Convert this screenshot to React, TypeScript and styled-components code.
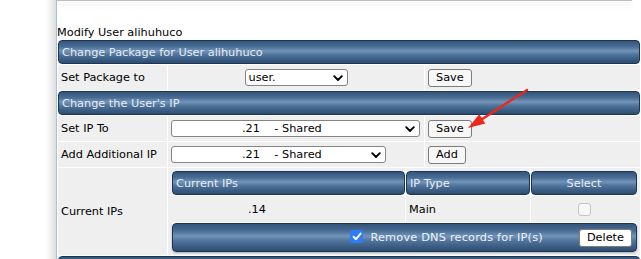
import React from 'react';
import styled, { createGlobalStyle } from 'styled-components';

const GlobalStyle = createGlobalStyle`
  html, body { margin: 0; padding: 0; background: #fff; }
  body {
    font-family: "DejaVu Sans", Verdana, sans-serif;
    font-size: 11.3px;
    color: #000;
    overflow: hidden;
  }
  * { box-sizing: border-box; }
`;

const barGradient = `linear-gradient(to bottom, #33557b 0%, #486c94 25%, #7394b9 45%, #50749b 62%, #2c4c71 100%)`;

const Page = styled.div`
  position: relative;
  display: flex;
  width: 641px;
  height: 259px;
  overflow: hidden;
`;

const Gutter = styled.div`
  flex: none;
  width: 57px;
  background: linear-gradient(to right, #fff 0, #fff 46px, #dedede 56px);
  border-right: 1px solid #a7c1dc;
`;

const Main = styled.div`
  flex: 1;
  min-width: 0;
  display: flex;
  flex-direction: column;
`;

const TopPanel = styled.div`
  height: 5px;
  margin-right: 9px;
  background: #fff;
  border-bottom: 1px solid #bdbdbd;
  box-shadow: 0 3px 6px rgba(0, 0, 0, 0.22);
`;

const Title = styled.div`
  margin-top: 25px;
  height: 14px;
  line-height: 14px;
  white-space: nowrap;
`;

const FormTable = styled.div`
  margin: 0 0 0 1px;
  width: 582px;
  display: grid;
  grid-template-columns: 109px 256px 215px;
  grid-template-rows: 24px 25px 24px 25px 25px 87px 24px;
  gap: 1px;
  background: #fff;
`;

const SectionHeader = styled.div`
  grid-column: 1 / -1;
  display: flex;
  align-items: center;
  padding-left: 3px;
  border: 1px solid #1c3553;
  border-radius: 4px;
  background: ${barGradient};
  color: #e6ecf3;
  white-space: nowrap;
`;

const Cell = styled.div<{ $center?: boolean; $span?: boolean }>`
  display: flex;
  align-items: center;
  justify-content: ${(p) => (p.$center ? 'center' : 'flex-start')};
  padding-left: ${(p) => (p.$center ? '0' : '3px')};
  background: #efefef;
  white-space: nowrap;
  ${(p) => (p.$span ? 'grid-column: 2 / 4; padding: 3px 3px 2px 4px; align-items: stretch;' : '')}
`;

const SelectBox = styled.div<{ $w: number; $indent: number }>`
  position: relative;
  width: ${(p) => p.$w}px;
  height: 17px;
  display: flex;
  align-items: center;
  padding-left: ${(p) => p.$indent}px;
  border: 1px solid #858585;
  border-radius: 3px;
  background: #fff;
  white-space: pre;
  line-height: 15px;
`;

const Chevron = styled.svg`
  position: absolute;
  right: 4px;
  top: 5px;
`;

const Button = styled.button<{ $white?: boolean }>`
  height: 18px;
  padding: 0 7px;
  font: inherit;
  line-height: 16px;
  color: #000;
  border: 1px solid #7c7c7c;
  border-radius: 3px;
  background: ${(p) => (p.$white ? '#fff' : '#f7f7f7')};
`;

const InnerTable = styled.div`
  flex: 1;
  display: grid;
  grid-template-columns: 233px 124px 106px;
  grid-template-rows: 24px 26px 29px;
  gap: 1px;
  background: #fff;
`;

const InnerHeader = styled.div<{ $center?: boolean }>`
  display: flex;
  align-items: center;
  justify-content: ${(p) => (p.$center ? 'center' : 'flex-start')};
  padding-left: ${(p) => (p.$center ? '0' : '3px')};
  border: 1px solid #1c3553;
  border-radius: 4px;
  background: ${barGradient};
  color: #e6ecf3;
`;

const DataCell = styled.div<{ $indent?: number; $center?: boolean }>`
  display: flex;
  align-items: center;
  justify-content: ${(p) => (p.$center ? 'center' : 'flex-start')};
  padding-left: ${(p) => p.$indent ?? 0}px;
  background: #efefef;
`;

const FooterBar = styled.div`
  grid-column: 1 / -1;
  display: flex;
  align-items: center;
  justify-content: flex-end;
  padding-right: 4px;
  border: 1px solid #1c3553;
  border-radius: 4px;
  background: ${barGradient};
  color: #eef2f6;
  box-shadow: 0 1px 2px rgba(0, 0, 0, 0.35);
`;

const CheckLabel = styled.label`
  display: flex;
  align-items: center;
  gap: 7px;
  margin-right: 36px;
  letter-spacing: 0.2px;
`;

const CheckedBox = styled.span`
  width: 13px;
  height: 13px;
  margin-top: -2px;
  border-radius: 2px;
  background: #2f7df6;
  display: flex;
  align-items: center;
  justify-content: center;
`;

const EmptyBox = styled.span`
  width: 13px;
  height: 13px;
  border: 1px solid #c4c4c4;
  border-radius: 3px;
  background: #f7f7f7;
`;

const Arrow = styled.svg`
  position: absolute;
  left: 460px;
  top: 84px;
`;

const ChevronIcon = () => (
  <Chevron width="10" height="7" viewBox="0 0 10 7">
    <polyline points="1.2,1.2 5,5 8.8,1.2" fill="none" stroke="#000" strokeWidth="1.9" strokeLinecap="round" strokeLinejoin="round" />
  </Chevron>
);

export default function App() {
  return (
    <>
      <GlobalStyle />
      <Page>
        <Gutter />
        <Main>
          <TopPanel />
          <Title>Modify User alihuhuco</Title>
          <FormTable>
            <SectionHeader>Change Package for User alihuhuco</SectionHeader>
            <Cell>Set Package to</Cell>
            <Cell $center>
              <SelectBox $w={103} $indent={3}>
                user.
                <ChevronIcon />
              </SelectBox>
            </Cell>
            <Cell>
              <Button>Save</Button>
            </Cell>

            <SectionHeader>Change the User's IP</SectionHeader>
            <Cell>Set IP To</Cell>
            <Cell>
              <SelectBox $w={249} $indent={70}>
                {'.21    - Shared'}
                <ChevronIcon />
              </SelectBox>
            </Cell>
            <Cell>
              <Button>Save</Button>
            </Cell>

            <Cell>Add Additional IP</Cell>
            <Cell>
              <SelectBox $w={215} $indent={70}>
                {'.21    - Shared'}
                <ChevronIcon />
              </SelectBox>
            </Cell>
            <Cell>
              <Button>Add</Button>
            </Cell>

            <Cell>Current IPs</Cell>
            <Cell $span>
              <InnerTable>
                <InnerHeader>Current IPs</InnerHeader>
                <InnerHeader>IP Type</InnerHeader>
                <InnerHeader $center>Select</InnerHeader>
                <DataCell $indent={76}>.14</DataCell>
                <DataCell $indent={3}>Main</DataCell>
                <DataCell $center>
                  <EmptyBox />
                </DataCell>
                <FooterBar>
                  <CheckLabel>
                    <CheckedBox>
                      <svg width="10" height="9" viewBox="0 0 10 9">
                        <polyline points="1.5,4.8 4,7.2 8.6,1.6" fill="none" stroke="#fff" strokeWidth="1.9" strokeLinecap="round" strokeLinejoin="round" />
                      </svg>
                    </CheckedBox>
                    Remove DNS records for IP(s)
                  </CheckLabel>
                  <Button $white>Delete</Button>
                </FooterBar>
              </InnerTable>
            </Cell>

            <SectionHeader />
          </FormTable>
        </Main>
        <Arrow width="75" height="50" viewBox="0 0 75 50">
          <line x1="67" y1="6" x2="20" y2="36.5" stroke="#e8291c" strokeWidth="2.4" strokeLinecap="round" />
          <polygon points="8,44 25.3,39.4 19.3,30.2" fill="#e8291c" />
        </Arrow>
      </Page>
    </>
  );
}
